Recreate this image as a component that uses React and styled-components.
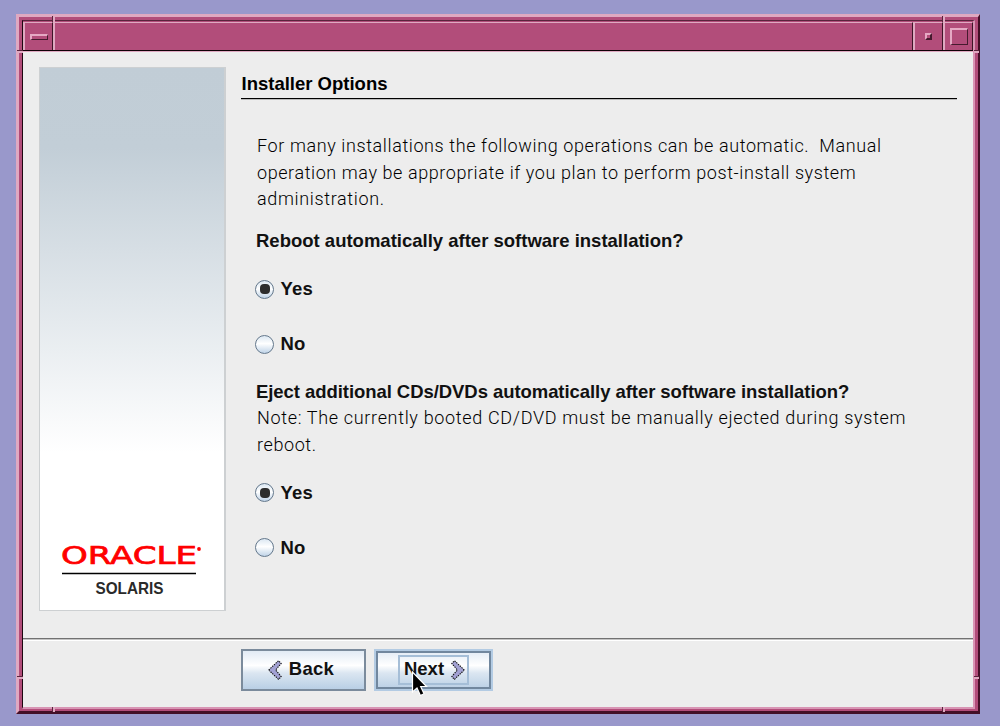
import React from "react";
import styled, { createGlobalStyle, css } from "styled-components";

const rose = "#b24d7a";
const pale = "#dfa9c1";
const shade = "#58243c";
const face = "#ededed";

const GlobalStyle = createGlobalStyle`
  * { box-sizing: border-box; }
  body { margin: 0; background: #9998cb; font-family: "Liberation Sans", Arial, sans-serif; color: #111; }
`;

const Desktop = styled.div`
  width: 1000px;
  height: 726px;
  padding: 14px 0 0 16px;
  overflow: hidden;
  background: #9998cb;
`;

const WindowFrame = styled.div`
  position: relative;
  width: 964px;
  height: 700px;
  padding: 3px 3px 2px 3px;
  border: solid;
  border-width: 3px 2px 3px 3px;
  border-color: ${pale} #430f27 #430f27 ${pale};
  background: ${rose};
`;

const FrameInner = styled.div`
  display: flex;
  flex-direction: column;
  height: 689px;
  border: solid;
  border-width: 1px 2px 2px 1px;
  border-color: ${shade} #d894b4 #d894b4 #1c0811;
`;

const FrameNotch = styled.i`
  position: absolute;
  ${(p) =>
    p.$vertical
      ? css`
          width: 3px;
          height: ${p.$length}px;
          background: linear-gradient(to right, ${shade} 1px, ${pale} 1px);
        `
      : css`
          width: ${p.$length}px;
          height: 3px;
          background: linear-gradient(to bottom, ${shade} 1px, ${pale} 1px);
        `}
  ${(p) => p.$at}
`;

const TitleBar = styled.div`
  display: flex;
  flex: none;
  height: 31px;
  padding-top: 1px;
  border-bottom: 1px solid ${pale};
  background: ${rose};
  box-shadow: inset 0 -1px #100006;
`;

const TitleCell = styled.div`
  display: flex;
  align-items: center;
  justify-content: center;
  width: ${(p) => p.$width || "auto"};
  flex: ${(p) => (p.$width ? "none" : "1")};
  height: 28px;
  border: solid;
  border-width: 1px 1px 0 2px;
  border-color: ${pale} #3e1427 transparent ${pale};
  background: ${rose};
`;

const Bevel = styled.i`
  width: ${(p) => p.$w}px;
  height: ${(p) => p.$h}px;
  border: solid;
  border-width: ${(p) => p.$t || "2px 1px 1px 2px"};
  border-color: #e5a9c4 #451a2e #451a2e #e5a9c4;
`;

const Content = styled.div`
  display: flex;
  flex: none;
  height: 586px;
  padding: 15px 16px 0 16px;
  background: ${face};
`;

const BrandPanel = styled.aside`
  display: flex;
  flex-direction: column;
  justify-content: flex-end;
  flex: none;
  width: 187px;
  height: 544px;
  padding: 0 22px 14px;
  border: 1px solid #cdd0d2;
  border-right-width: 2px;
  background: linear-gradient(#c1cdd6 0, #c2ced7 80px, #fff 385px);
`;

const Brand = styled.svg`
  display: block;
  width: 142px;
  height: 56px;
  overflow: visible;
`;

const Main = styled.main`
  width: 716px;
  margin-left: 15px;
  padding-top: 5px;
`;

const Heading = styled.h1`
  height: 27px;
  margin: 0 0 34px;
  border-bottom: 1px solid #000;
  box-shadow: 0 1px #bbb;
  color: #000;
  font-size: 18.5px;
  line-height: 24px;
  text-indent: 0.5px;
`;

const Line = styled.span`
  display: block;
  letter-spacing: ${(p) => p.$track}px;
  white-space: pre;
`;

const Copy = styled.p`
  margin: ${(p) => p.$gap || 0}px 0 0 16px;
  font: 300 18px/26.5px Roboto, sans-serif;
  color: #000;
`;

const Question = styled.h2`
  margin: ${(p) => p.$gap}px 0 0 15px;
  font-size: 18.5px;
  line-height: 24px;
  letter-spacing: ${(p) => p.$track || 0}px;
  white-space: nowrap;
`;

const Choices = styled.div`
  display: flex;
  flex-direction: column;
  gap: 31px;
  margin: ${(p) => p.$gap}px 0 0 14px;
`;

const Choice = styled.label`
  display: flex;
  align-items: center;
  gap: 6.5px;
  height: 24px;
  font-weight: bold;
  font-size: 18.5px;
  line-height: 24px;
  letter-spacing: 0.2px;
`;

const Radio = styled.span`
  display: grid;
  place-items: center;
  width: 19px;
  height: 19px;
  border: 1.5px solid #64788c;
  border-radius: 50%;
  background: linear-gradient(#dbe7f2, #fff 45%, #c0d4e8);

  &::after {
    content: "";
    width: 10px;
    height: 10px;
    border-radius: 4px;
    background: ${(p) => (p.$on ? "#2d2d2d" : "transparent")};
  }
`;

const Footer = styled.footer`
  position: relative;
  display: flex;
  flex: 1;
  gap: 8px;
  padding: 8px 0 0 218px;
  border-top: 1px solid #727272;
  background: ${face};
  box-shadow: inset 0 1px #c4c4c4, inset 0 2px #fff;
`;

const Button = styled.button`
  display: flex;
  align-items: center;
  justify-content: center;
  gap: 7px;
  width: ${(p) => (p.$focused ? 119 : 125)}px;
  height: 42px;
  margin-top: 2px;
  padding: 0 ${(p) => (p.$focused ? 0 : 5)}px 0 0;
  border: ${(p) => (p.$focused ? "2px solid #b3cbe3" : "2px solid #7b8b9c")};
  background: linear-gradient(#e2ebf5, #fff 38%, #dbe6f1 58%, #b9cfe5);
  box-shadow: ${(p) => (p.$focused ? "inset 0 0 0 2px #71879e" : "none")};
  color: #111;
  font: bold 18.5px/24px "Liberation Sans", Arial, sans-serif;
  letter-spacing: ${(p) => (p.$focused ? 0 : 0.3)}px;
`;

const FocusRing = styled.span`
  display: flex;
  align-items: center;
  gap: 7px;
  height: 30px;
  padding: 0 2px 0 4px;
  border: 2px solid #a5bed7;
`;

const Arrow = styled.svg`
  width: 14px;
  height: 20px;
  transform: ${(p) => (p.$flip ? "scaleX(-1)" : "none")};
`;

const Label = styled.span`
  margin-top: -2px;
`;

const Pointer = styled.svg`
  position: absolute;
  left: 388px;
  top: 31px;
  width: 18px;
  height: 28px;
`;

const Chevron = ({ flip }) => (
  <Arrow viewBox="0 0 14 20" $flip={flip}>
    <path d="M.7 10 10.5.7 13.2 3.4 7.6 10l5.6 6.6-2.7 2.7z" fill="#a3a2d4" stroke="#111" strokeWidth="1.1" strokeDasharray="1.4 1" />
  </Arrow>
);

const YesNo = ({ gap }) => (
  <Choices $gap={gap}>
    <Choice><Radio $on />Yes</Choice>
    <Choice><Radio />No</Choice>
  </Choices>
);

export default function App() {
  return (
    <Desktop>
      <GlobalStyle />
      <WindowFrame>
        <FrameInner>
          <TitleBar>
            <TitleCell $width="30px"><Bevel $w={18} $h={6} /></TitleCell>
            <TitleCell />
            <TitleCell $width="30px"><Bevel $w={7} $h={7} $t="2px" /></TitleCell>
            <TitleCell $width="30px"><Bevel $w={18} $h={17} /></TitleCell>
          </TitleBar>
          <Content>
            <BrandPanel>
              <Brand viewBox="0 0 142 56">
                <text x="-1" y="24.3" fill="#f00" stroke="#f00" strokeWidth="0.7" fontFamily="DejaVu Sans" fontSize="24" textLength="136" lengthAdjust="spacingAndGlyphs">ORACLE</text>
                <circle cx="137" cy="9" r="1.9" fill="#f00" />
                <path d="M0 33.5h134" stroke="#000" strokeWidth="1.3" />
                <text x="33.5" y="54" fill="#2a2a2a" fontFamily="Liberation Sans" fontWeight="bold" fontSize="16.5" textLength="68" lengthAdjust="spacingAndGlyphs">SOLARIS</text>
              </Brand>
            </BrandPanel>
            <Main>
              <Heading>Installer Options</Heading>
              <Copy>
                <Line $track={0.6}>{"For many installations the following operations can be automatic.  Manual"}</Line>
                <Line $track={0.58}>operation may be appropriate if you plan to perform post-install system</Line>
                <Line $track={0.65}>administration.</Line>
              </Copy>
              <Question $gap={16.5}>Reboot automatically after software installation?</Question>
              <YesNo gap={24} />
              <Question $gap={23.5} $track={-0.06}>Eject additional CDs/DVDs automatically after software installation?</Question>
              <Copy $gap={1.5}>
                <Line $track={0.67}>Note: The currently booted CD/DVD must be manually ejected during system</Line>
                <Line $track={0.6}>reboot.</Line>
              </Copy>
              <YesNo gap={22.5} />
            </Main>
          </Content>
          <Footer>
            <Button><Chevron /><Label>Back</Label></Button>
            <Button $focused>
              <FocusRing><Label>Next</Label><Chevron flip /></FocusRing>
            </Button>
            <Pointer viewBox="0 0 18 28">
              <path d="M1.5 2v20l4.5-4 3.4 7.5 3.6-1.7-3.3-7.3h5.8z" fill="#000" stroke="#fff" strokeWidth="1.2" />
            </Pointer>
          </Footer>
        </FrameInner>
        <FrameNotch $vertical $length={6} $at="left: 33px; top: -1px;" />
        <FrameNotch $vertical $length={6} $at="right: 33px; top: -1px;" />
        <FrameNotch $vertical $length={5} $at="left: 33px; bottom: -1px;" />
        <FrameNotch $vertical $length={5} $at="right: 33px; bottom: -1px;" />
        <FrameNotch $length={6} $at="left: -2px; top: 33px;" />
        <FrameNotch $length={5} $at="right: -1px; top: 33px;" />
        <FrameNotch $length={6} $at="left: -2px; bottom: 32px;" />
        <FrameNotch $length={5} $at="right: -1px; bottom: 32px;" />
      </WindowFrame>
    </Desktop>
  );
}
